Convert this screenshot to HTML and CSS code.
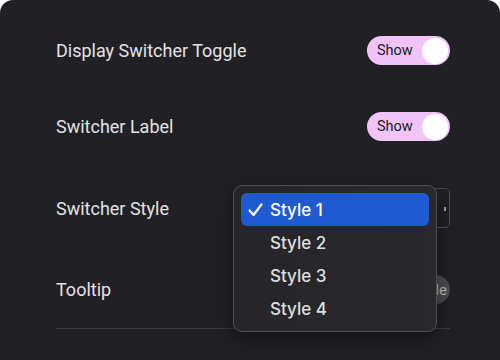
FILE: index.html
```html
<!DOCTYPE html>
<html lang="en">
<head>
    <meta charset="UTF-8">
    <meta name="viewport" content="width=device-width, initial-scale=1.0">
    <title>Switcher Settings</title>
    <link rel="stylesheet" href="styles.css">
</head>
<body>
    <div class="panel">
        <div class="settings">
            <div class="row">
                <span class="label">Display Switcher Toggle</span>
                <div class="toggle on"><span class="toggle-text">Show</span><span class="knob"></span></div>
            </div>
            <div class="row">
                <span class="label">Switcher Label</span>
                <div class="toggle on"><span class="toggle-text">Show</span><span class="knob"></span></div>
            </div>
            <div class="row row-select">
                <span class="label">Switcher Style</span>
                <div class="select-box"><span class="caret"></span></div>
                <ul class="menu">
                    <li class="menu-item active">
                        <svg class="check" width="15" height="14" viewBox="0 0 15 14"><path d="M1.5 7.5 L5.5 12 L13.5 1.5" fill="none" stroke="#fff" stroke-width="2.2" stroke-linecap="round" stroke-linejoin="round"/></svg>
                        Style 1
                    </li>
                    <li class="menu-item">Style 2</li>
                    <li class="menu-item">Style 3</li>
                    <li class="menu-item">Style 4</li>
                </ul>
            </div>
            <div class="row">
                <span class="label">Tooltip</span>
                <div class="toggle off"><span class="knob"></span><span class="toggle-text">Disable</span></div>
            </div>
        </div>
        <div class="divider"></div>
    </div>
</body>
</html>
```

FILE: styles.css
```css
* {
    box-sizing: border-box;
}

body {
    margin: 0;
    background: #ffffff;
    font-family: Roboto, "Liberation Sans", sans-serif;
}

.panel {
    width: 500px;
    height: 360px;
    background: #212125;
    border-radius: 13px 13px 0 0;
    padding: 36px 50px 0 56px;
}

.settings {
    display: flex;
    flex-direction: column;
    gap: 47px;
}

.row {
    display: flex;
    align-items: center;
    justify-content: space-between;
    height: 29px;
}

.row-select {
    height: 40px;
    position: relative;
}

.label {
    color: #e2e2e4;
    font-size: 18px;
}

.toggle {
    width: 83px;
    height: 29px;
    border-radius: 15px;
    display: flex;
    align-items: center;
    justify-content: space-between;
    padding: 0 2px 0 10px;
}

.toggle.on {
    background: #f0c3f9;
}

.toggle.off {
    background: #4a4a50;
    padding: 0 3px 0 2px;
}

.toggle-text {
    font-size: 14.5px;
    color: #1b1b1d;
}

.toggle.off .toggle-text {
    color: #b4b4b9;
    font-size: 15px;
}

.knob {
    width: 26px;
    height: 26px;
    border-radius: 50%;
    background: #ffffff;
}

.toggle.off .knob {
    background: #6a6a70;
}

.select-box {
    width: 200px;
    height: 40px;
    border: 1px solid #4c4c52;
    border-radius: 5px;
    position: relative;
}

.caret {
    position: absolute;
    right: 3px;
    top: 18px;
    width: 2px;
    height: 4px;
    background: #9a9aa0;
}

.menu {
    position: absolute;
    left: 177px;
    top: -3px;
    width: 204px;
    height: 147px;
    margin: 0;
    padding: 7px 7px;
    list-style: none;
    background: linear-gradient(90deg, #262628, #29292b);
    border: 1px solid #4e4e52;
    border-radius: 9px;
    box-shadow: 0 6px 18px rgba(0, 0, 0, 0.45);
    font-family: Inter, "Noto Sans", sans-serif;
}

.menu-item {
    height: 33px;
    display: flex;
    align-items: center;
    padding-left: 29px;
    color: #dedee0;
    font-size: 17px;
    font-weight: 500;
    border-radius: 6px;
}

.menu-item.active {
    background: #1f5ad0;
    color: #ffffff;
    padding-left: 7px;
    gap: 7px;
}

.check {
    flex: none;
}

.divider {
    margin-top: 24px;
    height: 1px;
    background: #3a3a3f;
}
```
